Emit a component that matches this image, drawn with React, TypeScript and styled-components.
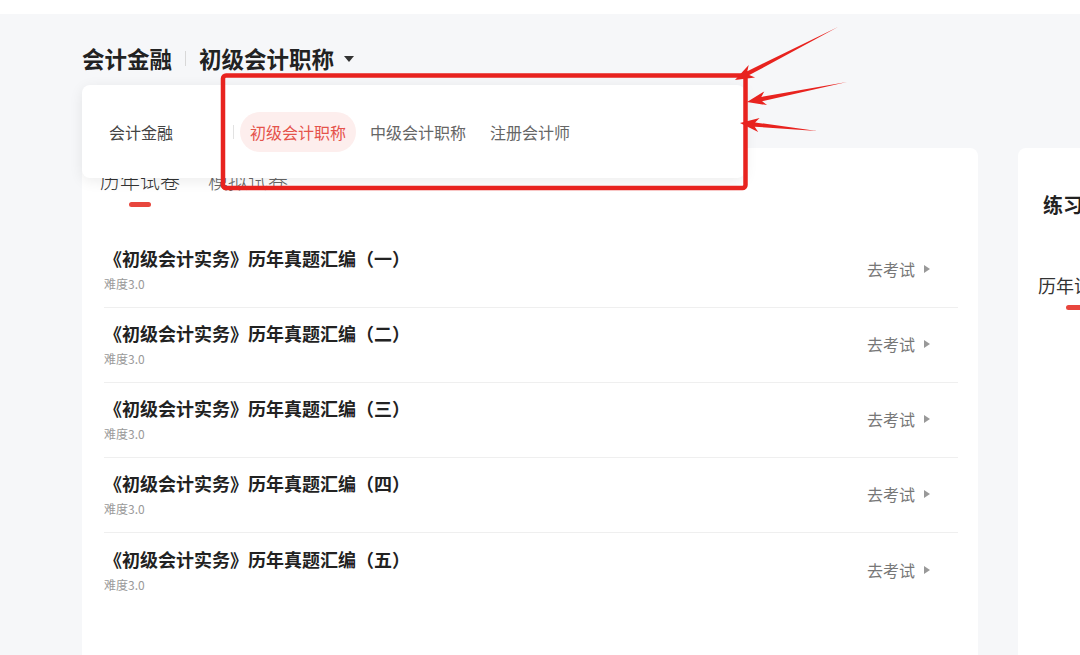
import React from "react";
import styled, { createGlobalStyle } from "styled-components";

const GlobalStyle = createGlobalStyle`
  html, body {
    margin: 0;
    padding: 0;
    background: #f6f7f9;
    overflow: hidden;
  }
  body {
    font-family: "Noto Sans CJK SC", "Noto Sans", sans-serif;
    color: #222;
  }
`;

const Screen = styled.div`
  position: relative;
  width: 1080px;
  height: 655px;
  overflow: hidden;
  background: #f6f7f9;
`;

const TopStrip = styled.div`
  height: 14px;
  background: #ffffff;
`;

const Page = styled.div`
  padding: 29px 0 0 82px;
`;

const HeaderWrap = styled.div`
  position: relative;
  z-index: 2;
`;

const Header = styled.div`
  display: flex;
  align-items: center;
  height: 30px;
  font-size: 22.5px;
  font-weight: 700;
  color: #222;
`;

const HeaderDivider = styled.span`
  width: 1px;
  height: 15px;
  background: #d8d8d8;
  margin: 0 13px;
`;

const Caret = styled.span`
  width: 0;
  height: 0;
  margin-left: 10px;
  margin-top: 2px;
  border-left: 5px solid transparent;
  border-right: 5px solid transparent;
  border-top: 6px solid #333;
`;

/* dropdown opened below the header */
const Panel = styled.div`
  position: absolute;
  left: 0;
  top: 42px;
  width: 663px;
  height: 93px;
  background: #ffffff;
  border-radius: 8px;
  box-shadow: 0 3px 14px rgba(0, 0, 0, 0.08);
  display: flex;
  align-items: center;
  padding-left: 27px;
  box-sizing: border-box;
`;

const PanelGroup = styled.span`
  font-size: 16px;
  color: #444;
  width: 124px;
`;

const PanelDivider = styled.span`
  width: 1px;
  height: 14px;
  background: #e2e2e2;
  margin-right: 6px;
`;

const PanelOptions = styled.div`
  display: flex;
  gap: 4px;
`;

const Option = styled.span<{ $active?: boolean }>`
  height: 40px;
  line-height: 40px;
  padding: 0 10px;
  border-radius: 20px;
  font-size: 16px;
  color: ${(p) => (p.$active ? "#e5534b" : "#666")};
  background: ${(p) => (p.$active ? "#fdeeed" : "transparent")};
`;

const Content = styled.div`
  display: flex;
  gap: 40px;
  margin-top: 75px;
`;

const MainCard = styled.div`
  width: 896px;
  height: 560px;
  background: #ffffff;
  border-radius: 8px;
  padding: 22px 20px 0 22px;
  box-sizing: border-box;
  flex-shrink: 0;
`;

const Tabs = styled.div`
  display: flex;
  gap: 28px;
  margin-left: -4px;
`;

const Tab = styled.div<{ $active?: boolean }>`
  display: flex;
  flex-direction: column;
  align-items: center;
  font-size: 20px;
  line-height: 22px;
  font-weight: 300;
  color: ${(p) => (p.$active ? "#333" : "#666")};
`;

const TabBar = styled.span`
  width: 22px;
  height: 5px;
  border-radius: 3px;
  margin-top: 10px;
  background: #e8463d;
`;

const List = styled.div`
  margin-top: 26px;
`;

const Item = styled.div`
  display: flex;
  align-items: center;
  height: 75px;
  box-sizing: border-box;
  border-bottom: 1px solid #efefef;

  &:last-child {
    border-bottom: none;
  }
`;

const ItemText = styled.div`
  flex: 1;
  margin-top: -1px;
`;

const ItemTitle = styled.div`
  font-size: 18px;
  line-height: 24px;
  font-weight: 700;
  color: #222;
`;

const ItemSub = styled.div`
  font-size: 12px;
  line-height: 18px;
  margin-top: 5px;
  color: #999;
`;

const GoButton = styled.div`
  display: flex;
  align-items: center;
  font-size: 16px;
  color: #777;
  margin-right: 28px;
  margin-top: -2px;
`;

const GoArrow = styled.span`
  width: 0;
  height: 0;
  margin-left: 9px;
  border-top: 4px solid transparent;
  border-bottom: 4px solid transparent;
  border-left: 6px solid #999;
`;

const SideCard = styled.div`
  width: 300px;
  height: 560px;
  background: #ffffff;
  border-radius: 8px;
  padding: 45px 0 0 25px;
  box-sizing: border-box;
  flex-shrink: 0;
`;

const SideTitle = styled.div`
  font-size: 20px;
  line-height: 24px;
  font-weight: 700;
  color: #222;
`;

const SideTab = styled.div`
  margin: 56px 0 0 -5px;
  font-size: 18px;
  line-height: 24px;
  color: #333;
`;

const SideBar = styled.div`
  width: 22px;
  height: 5px;
  border-radius: 3px;
  margin: 8px 0 0 23px;
  background: #e8463d;
`;

/* red annotation drawn over the screenshot */
const Overlay = styled.svg`
  position: absolute;
  left: 0;
  top: 0;
  z-index: 5;
  pointer-events: none;
`;

const arrowPoints = (tx: number, ty: number, hx: number, hy: number) => {
  const dx = hx - tx;
  const dy = hy - ty;
  const len = Math.hypot(dx, dy);
  const ux = dx / len;
  const uy = dy / len;
  const px = -uy;
  const py = ux;
  const headLen = 15;
  const headW = 7;
  const shaftW = 2.2;
  const bx = hx - ux * headLen;
  const by = hy - uy * headLen;
  const pts = [
    [tx, ty],
    [bx + px * shaftW, by + py * shaftW],
    [bx - ux * 4 + px * headW, by - uy * 4 + py * headW],
    [hx, hy],
    [bx - ux * 4 - px * headW, by - uy * 4 - py * headW],
    [bx - px * shaftW, by - py * shaftW],
  ];
  return pts.map((p) => `${p[0].toFixed(1)},${p[1].toFixed(1)}`).join(" ");
};

const papers = ["一", "二", "三", "四", "五"];

const App: React.FC = () => {
  return (
    <Screen>
      <GlobalStyle />
      <TopStrip />
      <Page>
        <HeaderWrap>
          <Header>
            会计金融
            <HeaderDivider />
            初级会计职称
            <Caret />
          </Header>
          <Panel>
            <PanelGroup>会计金融</PanelGroup>
            <PanelDivider />
            <PanelOptions>
              <Option $active>初级会计职称</Option>
              <Option>中级会计职称</Option>
              <Option>注册会计师</Option>
            </PanelOptions>
          </Panel>
        </HeaderWrap>
        <Content>
          <MainCard>
            <Tabs>
              <Tab $active>
                历年试卷
                <TabBar />
              </Tab>
              <Tab>模拟试卷</Tab>
            </Tabs>
            <List>
              {papers.map((n) => (
                <Item key={n}>
                  <ItemText>
                    <ItemTitle>《初级会计实务》历年真题汇编（{n}）</ItemTitle>
                    <ItemSub>难度3.0</ItemSub>
                  </ItemText>
                  <GoButton>
                    去考试
                    <GoArrow />
                  </GoButton>
                </Item>
              ))}
            </List>
          </MainCard>
          <SideCard>
            <SideTitle>练习题库</SideTitle>
            <SideTab>历年试卷</SideTab>
            <SideBar />
          </SideCard>
        </Content>
      </Page>
      <Overlay width="1080" height="655" viewBox="0 0 1080 655">
        <rect
          x="223"
          y="75.5"
          width="522.5"
          height="112.5"
          rx="3"
          fill="none"
          stroke="#e8231f"
          strokeWidth="4.5"
        />
        <polygon points={arrowPoints(838, 27, 735, 80)} fill="#e8231f" />
        <polygon points={arrowPoints(847, 82, 747, 102)} fill="#e8231f" />
        <polygon points={arrowPoints(817, 131, 740, 123)} fill="#e8231f" />
      </Overlay>
    </Screen>
  );
};

export default App;
